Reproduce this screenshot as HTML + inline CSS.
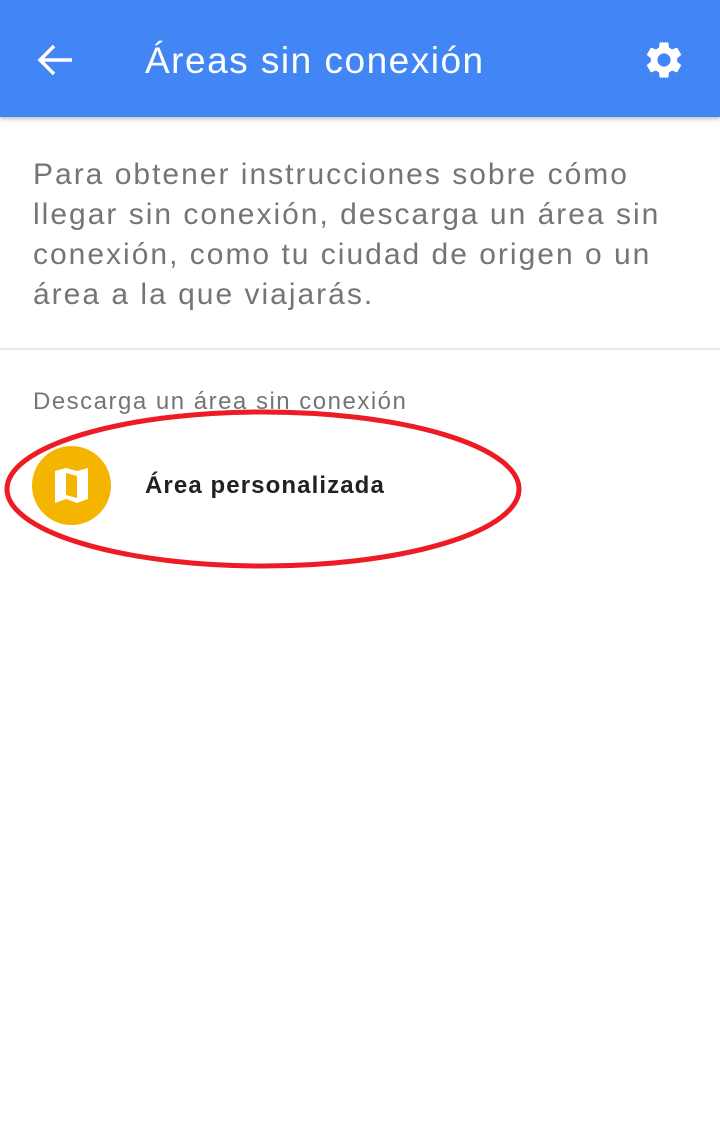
<!DOCTYPE html>
<html><head><meta charset="utf-8"><style>
*{margin:0;padding:0;box-sizing:border-box}
body{width:720px;height:1134px;background:#fff;font-family:"Liberation Sans",Arial,sans-serif;position:relative;overflow:hidden}
.hdr{position:absolute;left:0;top:0;width:720px;height:117px;background:#4285f4;box-shadow:0 2px 4px rgba(0,0,0,.25)}
.title{position:absolute;left:145px;top:39px;color:#fff;font-size:37px;line-height:44px;letter-spacing:1.5px;white-space:nowrap}
.p{position:absolute;left:33px;top:155px;color:#757575;font-size:30px;line-height:40px;letter-spacing:2px;white-space:nowrap}
.div{position:absolute;left:0;top:348px;width:720px;height:2px;background:#e8e8e8}
.lbl{position:absolute;left:33px;top:387px;color:#757575;font-size:24px;line-height:30px;letter-spacing:1.5px;white-space:nowrap}
.circ{position:absolute;left:32px;top:446px;width:79px;height:79px;border-radius:50%;background:#f4b400}
.item{position:absolute;left:145px;top:471px;color:#212121;font-size:24px;font-weight:bold;line-height:30px;letter-spacing:1.1px;white-space:nowrap}
</style></head><body>
<div class="hdr">
<svg style="position:absolute;left:36px;top:42px" width="38" height="36" viewBox="0 0 38 36"><path d="M36 18H4M18 4L4 18L18 32" stroke="#fff" stroke-width="3.5" fill="none"/></svg>
<div class="title">Áreas sin conexión</div>
<svg style="position:absolute;left:642px;top:38px" width="44" height="44" viewBox="0 0 24 24"><path fill="#fff" d="M19.14 12.94c.04-.3.06-.61.06-.94 0-.32-.02-.64-.07-.94l2.030-1.58a.49.49 0 00.12-.61l-1.92-3.32a.49.49 0 00-.59-.22l-2.39.96c-.5-.38-1.03-.7-1.620-.94l-.36-2.54a.48.48 0 00-.48-.41h-3.840c-.24 0-.43.17-.47.41l-.36 2.54c-.59.24-1.13.57-1.62.94l-2.39-.96a.48.48 0 00-.59.22L2.74 8.87c-.12.21-.08.47.12.61l2.03 1.58c-.05.3-.09.63-.09.94s.02.64.07.94l-2.03 1.58a.49.49 0 00-.12.61l1.92 3.32c.12.22.37.29.59.22l2.39-.96c.5.38 1.03.7 1.62.94l.36 2.54c.05.24.24.41.48.41h3.84c.24 0 .44-.17.47-.41l.36-2.54c.59-.24 1.13-.56 1.62-.94l2.39.96c.22.08.47 0 .59-.22l1.92-3.32c.12-.22.07-.47-.12-.61l-2.01-1.58zM12 15.6A3.6 3.6 0 1112 8.4a3.6 3.6 0 010 7.2z"/></svg>
</div>
<div class="p">Para obtener instrucciones sobre cómo<br>llegar sin conexión, descarga un área sin<br>conexión, como tu ciudad de origen o un<br>área a la que viajarás.</div>
<div class="div"></div>
<div class="lbl">Descarga un área sin conexión</div>
<div class="circ"><svg style="position:absolute;left:23px;top:22px" width="34" height="35" viewBox="0 0 34 35"><path fill="#fff" d="M0 3L11 0L22 3L33 0V31L22 35L11 31L0 35Z"/><path fill="#f4b400" d="M11 5V27L22 30V8Z"/></svg></div>
<div class="item">Área personalizada</div>
<svg style="position:absolute;left:0;top:400px" width="540" height="180"><ellipse cx="263" cy="89" rx="256" ry="77" fill="none" stroke="#ed1c24" stroke-width="5"/></svg>
</body></html>
